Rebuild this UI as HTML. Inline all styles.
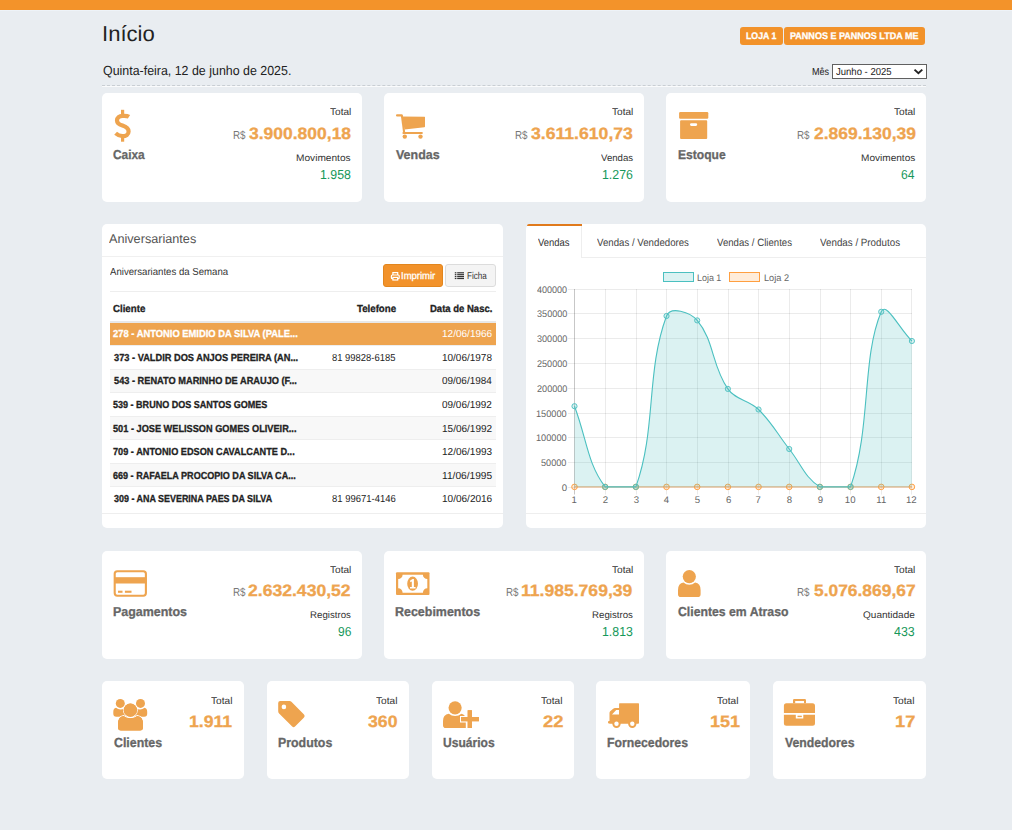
<!DOCTYPE html>
<html><head><meta charset="utf-8"><title>Início</title><style>
*{margin:0;padding:0;box-sizing:border-box}
html,body{width:1012px;height:830px;overflow:hidden;background:#e9edf1;font-family:"Liberation Sans",sans-serif;text-rendering:geometricPrecision}
.a{position:absolute}
.t{position:absolute;white-space:nowrap;font-family:"Liberation Sans",sans-serif}
.card{position:absolute;background:#fff;border-radius:5px}
</style></head><body>
<div class="a" style="left:0.00px;top:0.00px;width:1012.00px;height:10.00px;background:#f3932a;"></div>
<div class="a" style="left:0.00px;top:10.00px;width:1012.00px;height:1.00px;background:#eef3f8;"></div>
<div class="a" style="left:740.00px;top:27.00px;width:43.00px;height:18.00px;background:#f2922a;border-radius:3px"></div>
<div class="a" style="left:784.00px;top:27.00px;width:141.00px;height:18.00px;background:#f2922a;border-radius:3px"></div>
<div class="a" style="left:832.00px;top:64.00px;width:95.00px;height:15.00px;background:#fff;border:1px solid #606060"></div>
<div class="a" style="left:102px;top:85px;width:824px;height:0;border-top:1px dashed #c9ced3"></div>
<div class="a" style="left:102.00px;top:86.00px;width:824.00px;height:1.00px;background:#fafbfc;"></div>
<div class="card" style="left:102.00px;top:93.00px;width:260.00px;height:109.00px;"></div>
<div class="card" style="left:102.00px;top:551.00px;width:260.00px;height:108.00px;"></div>
<div class="card" style="left:384.00px;top:93.00px;width:260.00px;height:109.00px;"></div>
<div class="card" style="left:384.00px;top:551.00px;width:260.00px;height:108.00px;"></div>
<div class="card" style="left:666.00px;top:93.00px;width:260.00px;height:109.00px;"></div>
<div class="card" style="left:666.00px;top:551.00px;width:260.00px;height:108.00px;"></div>
<div class="card" style="left:102.00px;top:681.00px;width:142.00px;height:98.00px;"></div>
<div class="card" style="left:267.00px;top:681.00px;width:142.00px;height:98.00px;"></div>
<div class="card" style="left:432.00px;top:681.00px;width:142.00px;height:98.00px;"></div>
<div class="card" style="left:596.00px;top:681.00px;width:154.00px;height:98.00px;"></div>
<div class="card" style="left:773.00px;top:681.00px;width:153.00px;height:98.00px;"></div>
<div class="card" style="left:102.00px;top:224.00px;width:401.00px;height:304.00px;"></div>
<div class="card" style="left:526.00px;top:224.00px;width:400.00px;height:304.00px;"></div>
<div class="a" style="left:102.00px;top:256.00px;width:401.00px;height:1.00px;background:#f0f0f0;"></div>
<div class="a" style="left:110.00px;top:291.00px;width:386.00px;height:1.00px;background:#eeeeee;"></div>
<div class="a" style="left:110.00px;top:321.00px;width:386.00px;height:2.00px;background:#e8e8e8;"></div>
<div class="a" style="left:110.00px;top:322.70px;width:386.00px;height:22.30px;background:#eea44f;"></div>
<div class="a" style="left:110.00px;top:345.00px;width:386.00px;height:1.00px;background:#eeeeee;"></div>
<div class="a" style="left:110.00px;top:369.00px;width:386.00px;height:1.00px;background:#eeeeee;"></div>
<div class="a" style="left:110.00px;top:370.00px;width:386.00px;height:22.00px;background:#f8f8f8;"></div>
<div class="a" style="left:110.00px;top:392.00px;width:386.00px;height:1.00px;background:#eeeeee;"></div>
<div class="a" style="left:110.00px;top:416.00px;width:386.00px;height:1.00px;background:#eeeeee;"></div>
<div class="a" style="left:110.00px;top:417.00px;width:386.00px;height:22.00px;background:#f8f8f8;"></div>
<div class="a" style="left:110.00px;top:439.00px;width:386.00px;height:1.00px;background:#eeeeee;"></div>
<div class="a" style="left:110.00px;top:463.00px;width:386.00px;height:1.00px;background:#eeeeee;"></div>
<div class="a" style="left:110.00px;top:464.00px;width:386.00px;height:22.00px;background:#f8f8f8;"></div>
<div class="a" style="left:110.00px;top:486.00px;width:386.00px;height:1.00px;background:#eeeeee;"></div>
<div class="a" style="left:102.00px;top:513.00px;width:401.00px;height:1.00px;background:#eeeeee;"></div>
<div class="a" style="left:383.00px;top:264.00px;width:60.00px;height:23.00px;background:#f2922a;border:1px solid #e2861e;border-radius:3px"></div>
<div class="a" style="left:445.00px;top:264.00px;width:51.00px;height:23.00px;background:#f4f4f4;border:1px solid #dcdcdc;border-radius:3px"></div>
<div class="a" style="left:582.00px;top:257.00px;width:344.00px;height:1.00px;background:#eeeeee;"></div>
<div class="a" style="left:581.00px;top:226.00px;width:1.00px;height:32.00px;background:#eeeeee;"></div>
<div class="a" style="left:526.50px;top:224.00px;width:55.50px;height:2.00px;background:#e07a1c;border-radius:4px 0 0 0"></div>
<div class="a" style="left:526.00px;top:513.00px;width:400.00px;height:1.00px;background:#eeeeee;"></div>
<svg class="a" style="left:0;top:0" width="1012" height="830" viewBox="0 0 1012 830"><line x1="574.5" y1="289.0" x2="574.5" y2="494.5" stroke="rgba(0,0,0,0.22)" stroke-width="1"/><line x1="605.5" y1="289.0" x2="605.5" y2="494.5" stroke="rgba(0,0,0,0.08)" stroke-width="1"/><line x1="636.5" y1="289.0" x2="636.5" y2="494.5" stroke="rgba(0,0,0,0.08)" stroke-width="1"/><line x1="666.5" y1="289.0" x2="666.5" y2="494.5" stroke="rgba(0,0,0,0.08)" stroke-width="1"/><line x1="697.5" y1="289.0" x2="697.5" y2="494.5" stroke="rgba(0,0,0,0.08)" stroke-width="1"/><line x1="728.5" y1="289.0" x2="728.5" y2="494.5" stroke="rgba(0,0,0,0.08)" stroke-width="1"/><line x1="758.5" y1="289.0" x2="758.5" y2="494.5" stroke="rgba(0,0,0,0.08)" stroke-width="1"/><line x1="789.5" y1="289.0" x2="789.5" y2="494.5" stroke="rgba(0,0,0,0.08)" stroke-width="1"/><line x1="820.5" y1="289.0" x2="820.5" y2="494.5" stroke="rgba(0,0,0,0.08)" stroke-width="1"/><line x1="850.5" y1="289.0" x2="850.5" y2="494.5" stroke="rgba(0,0,0,0.08)" stroke-width="1"/><line x1="881.5" y1="289.0" x2="881.5" y2="494.5" stroke="rgba(0,0,0,0.08)" stroke-width="1"/><line x1="911.5" y1="289.0" x2="911.5" y2="494.5" stroke="rgba(0,0,0,0.08)" stroke-width="1"/><line x1="568.0" y1="487.5" x2="912.0" y2="487.5" stroke="rgba(0,0,0,0.08)" stroke-width="1"/><line x1="568.0" y1="462.5" x2="912.0" y2="462.5" stroke="rgba(0,0,0,0.08)" stroke-width="1"/><line x1="568.0" y1="437.5" x2="912.0" y2="437.5" stroke="rgba(0,0,0,0.08)" stroke-width="1"/><line x1="568.0" y1="413.5" x2="912.0" y2="413.5" stroke="rgba(0,0,0,0.08)" stroke-width="1"/><line x1="568.0" y1="388.5" x2="912.0" y2="388.5" stroke="rgba(0,0,0,0.08)" stroke-width="1"/><line x1="568.0" y1="363.5" x2="912.0" y2="363.5" stroke="rgba(0,0,0,0.08)" stroke-width="1"/><line x1="568.0" y1="338.5" x2="912.0" y2="338.5" stroke="rgba(0,0,0,0.08)" stroke-width="1"/><line x1="568.0" y1="313.5" x2="912.0" y2="313.5" stroke="rgba(0,0,0,0.08)" stroke-width="1"/><line x1="568.0" y1="289.5" x2="912.0" y2="289.5" stroke="rgba(0,0,0,0.08)" stroke-width="1"/><line x1="574.50" y1="486.90" x2="911.90" y2="486.90" stroke="rgba(235,165,105,0.85)" stroke-width="1.4"/><circle cx="574.50" cy="486.90" r="2.8" fill="rgba(255,159,64,0.2)" stroke="rgba(255,159,64,0.95)" stroke-width="1"/><circle cx="605.17" cy="486.90" r="2.8" fill="rgba(255,159,64,0.2)" stroke="rgba(255,159,64,0.95)" stroke-width="1"/><circle cx="635.85" cy="486.90" r="2.8" fill="rgba(255,159,64,0.2)" stroke="rgba(255,159,64,0.95)" stroke-width="1"/><circle cx="666.52" cy="486.90" r="2.8" fill="rgba(255,159,64,0.2)" stroke="rgba(255,159,64,0.95)" stroke-width="1"/><circle cx="697.19" cy="486.90" r="2.8" fill="rgba(255,159,64,0.2)" stroke="rgba(255,159,64,0.95)" stroke-width="1"/><circle cx="727.86" cy="486.90" r="2.8" fill="rgba(255,159,64,0.2)" stroke="rgba(255,159,64,0.95)" stroke-width="1"/><circle cx="758.54" cy="486.90" r="2.8" fill="rgba(255,159,64,0.2)" stroke="rgba(255,159,64,0.95)" stroke-width="1"/><circle cx="789.21" cy="486.90" r="2.8" fill="rgba(255,159,64,0.2)" stroke="rgba(255,159,64,0.95)" stroke-width="1"/><circle cx="819.88" cy="486.90" r="2.8" fill="rgba(255,159,64,0.2)" stroke="rgba(255,159,64,0.95)" stroke-width="1"/><circle cx="850.55" cy="486.90" r="2.8" fill="rgba(255,159,64,0.2)" stroke="rgba(255,159,64,0.95)" stroke-width="1"/><circle cx="881.23" cy="486.90" r="2.8" fill="rgba(255,159,64,0.2)" stroke="rgba(255,159,64,0.95)" stroke-width="1"/><circle cx="911.90" cy="486.90" r="2.8" fill="rgba(255,159,64,0.2)" stroke="rgba(255,159,64,0.95)" stroke-width="1"/><path d="M574.50 406.20 C586.77 438.48 587.07 463.08 605.17 486.90 C611.61 486.90 632.16 486.90 635.85 486.90 C656.70 428.80 645.70 372.51 666.52 316.00 C670.23 305.91 690.02 311.88 697.19 320.40 C714.56 341.04 711.42 365.02 727.86 388.90 C735.96 400.66 748.11 399.29 758.54 409.50 C772.65 423.33 776.78 433.32 789.21 449.00 C801.32 464.28 804.82 477.59 819.88 486.90 C829.36 486.90 846.94 486.90 850.55 486.90 C871.48 427.17 861.41 358.93 881.23 311.80 C885.95 300.57 899.63 329.32 911.90 341.00 L911.90 486.90 L574.50 486.90 Z" fill="rgba(75,192,192,0.2)" stroke="none"/><path d="M574.50 406.20 C586.77 438.48 587.07 463.08 605.17 486.90 C611.61 486.90 632.16 486.90 635.85 486.90 C656.70 428.80 645.70 372.51 666.52 316.00 C670.23 305.91 690.02 311.88 697.19 320.40 C714.56 341.04 711.42 365.02 727.86 388.90 C735.96 400.66 748.11 399.29 758.54 409.50 C772.65 423.33 776.78 433.32 789.21 449.00 C801.32 464.28 804.82 477.59 819.88 486.90 C829.36 486.90 846.94 486.90 850.55 486.90 C871.48 427.17 861.41 358.93 881.23 311.80 C885.95 300.57 899.63 329.32 911.90 341.00" fill="none" stroke="rgb(75,192,192)" stroke-width="1.1"/><circle cx="574.50" cy="406.20" r="2.6" fill="rgba(75,192,192,0.2)" stroke="rgba(75,192,192,0.9)" stroke-width="1"/><circle cx="605.17" cy="486.90" r="2.6" fill="rgba(75,192,192,0.2)" stroke="rgba(75,192,192,0.9)" stroke-width="1"/><circle cx="635.85" cy="486.90" r="2.6" fill="rgba(75,192,192,0.2)" stroke="rgba(75,192,192,0.9)" stroke-width="1"/><circle cx="666.52" cy="316.00" r="2.6" fill="rgba(75,192,192,0.2)" stroke="rgba(75,192,192,0.9)" stroke-width="1"/><circle cx="697.19" cy="320.40" r="2.6" fill="rgba(75,192,192,0.2)" stroke="rgba(75,192,192,0.9)" stroke-width="1"/><circle cx="727.86" cy="388.90" r="2.6" fill="rgba(75,192,192,0.2)" stroke="rgba(75,192,192,0.9)" stroke-width="1"/><circle cx="758.54" cy="409.50" r="2.6" fill="rgba(75,192,192,0.2)" stroke="rgba(75,192,192,0.9)" stroke-width="1"/><circle cx="789.21" cy="449.00" r="2.6" fill="rgba(75,192,192,0.2)" stroke="rgba(75,192,192,0.9)" stroke-width="1"/><circle cx="819.88" cy="486.90" r="2.6" fill="rgba(75,192,192,0.2)" stroke="rgba(75,192,192,0.9)" stroke-width="1"/><circle cx="850.55" cy="486.90" r="2.6" fill="rgba(75,192,192,0.2)" stroke="rgba(75,192,192,0.9)" stroke-width="1"/><circle cx="881.23" cy="311.80" r="2.6" fill="rgba(75,192,192,0.2)" stroke="rgba(75,192,192,0.9)" stroke-width="1"/><circle cx="911.90" cy="341.00" r="2.6" fill="rgba(75,192,192,0.2)" stroke="rgba(75,192,192,0.9)" stroke-width="1"/><rect x="663.5" y="272.5" width="30" height="9" fill="rgba(75,192,192,0.2)" stroke="rgb(75,192,192)" stroke-width="1"/><rect x="729.5" y="272.5" width="30" height="9" fill="rgba(255,159,64,0.2)" stroke="rgb(255,159,64)" stroke-width="1"/><path d="M914.5 69.6 L918.4 73.3 L922.3 69.6" fill="none" stroke="#222" stroke-width="1.9"/><path d="M129 116.8 C127 115.5 125 115.8 122.5 115.8 C119.3 115.8 117 117.5 117 120.5 C117 123.5 119.5 124.6 122.5 125.6 C125.8 126.7 128.6 128.2 128.6 131.5 C128.6 134.5 126 136.2 122.5 136.2 C119.5 136.2 117.5 135 115.6 133.3" fill="none" stroke="#eea44f" stroke-width="4.2"/><rect x="121" y="109.8" width="3.2" height="5" fill="#eea44f"/><rect x="121" y="136.5" width="3.2" height="5.2" fill="#eea44f"/><g transform="translate(396,114)" fill="#eea44f"><rect x="0" y="0.2" width="6.8" height="2.3" rx="1.1"/><path d="M4.8 1.2 L6.9 1.2 L9.2 18.4 L7.1 18.4 Z"/><path d="M5.6 2.6 L28.6 2.8 Q29 2.8 29 3.3 L29 12.6 Q29 13.1 28.4 13.2 L8.6 15.5 Z"/><rect x="6.4" y="18.1" width="20.5" height="2" rx="1"/><circle cx="8.8" cy="22.6" r="2.2"/><circle cx="24.5" cy="22.6" r="2.2"/></g><rect x="679.1" y="112" width="29.2" height="6.8" rx="1.2" fill="#eea44f"/><path d="M681.1 120.2 H706.2 Q707.2 120.2 707.2 121.2 V138 Q707.2 139 706.2 139 H681.1 Q680.1 139 680.1 138 V121.2 Q680.1 120.2 681.1 120.2 Z M691.3 123.2 Q690 123.2 690 124.55 Q690 125.9 691.3 125.9 H695.9 Q697.2 125.9 697.2 124.55 Q697.2 123.2 695.9 123.2 Z" fill="#eea44f" fill-rule="evenodd"/><rect x="114.7" y="571.2" width="31.2" height="24.5" rx="2.6" fill="none" stroke="#eea44f" stroke-width="2.1"/><rect x="114" y="577.2" width="32.5" height="6.3" fill="#eea44f"/><rect x="118" y="590.7" width="4.5" height="2.1" fill="#eea44f"/><rect x="124.9" y="590.7" width="6.6" height="2.1" fill="#eea44f"/><g transform="translate(396,572.3)"><rect x="0" y="0" width="33.5" height="22.6" rx="1" fill="#eea44f"/><path d="M6.6 2.4 H26.9 A4.4 4.4 0 0 0 31.3 6.8 V16 A4.4 4.4 0 0 0 26.9 20.4 H6.6 A4.4 4.4 0 0 0 2.2 16 V6.8 A4.4 4.4 0 0 0 6.6 2.4 Z" fill="#fff"/><ellipse cx="16.6" cy="11.4" rx="5.4" ry="7.1" fill="#eea44f"/><path d="M14.2 8.3 L16.6 6.6 H17.9 V14.6 H19.6 V16.2 H14 V14.6 H15.8 V9.2 L14.2 10 Z" fill="#fff"/></g><circle cx="689.3" cy="576.6" r="6.6" fill="#eea44f"/><path d="M683.5 582.6 Q686 584.8 689.3 584.8 Q692.6 584.8 695.1 582.6 Q700.6 583.6 700.6 590 V594.2 Q700.6 597 697.8 597 H680.8 Q678 597 678 594.2 V590 Q678 583.6 683.5 582.6 Z" fill="#eea44f"/><g fill="#eea44f"><circle cx="120.3" cy="703.4" r="4.5"/><circle cx="140.5" cy="703.4" r="4.5"/><path d="M116 707.8 Q118 709.4 120.4 709.4 Q122.8 709.4 124.6 707.9 Q127.2 708.6 127.2 713 V716.8 H116.3 Q113.3 716.8 113.3 713.8 V711.8 Q113.3 708.4 116 707.8 Z"/><path d="M144.5 707.8 Q142.5 709.4 140.1 709.4 Q137.7 709.4 135.9 707.9 Q133.3 708.6 133.3 713 V716.8 H144.2 Q147.2 716.8 147.2 713.8 V711.8 Q147.2 708.4 144.5 707.8 Z"/></g><g fill="#eea44f" stroke="#fff" stroke-width="1.6" paint-order="stroke"><circle cx="130.4" cy="710.2" r="6.6"/><path d="M123.5 715.9 Q126.5 718.2 130.4 718.2 Q134.3 718.2 137.3 715.9 Q143 716.8 143 723.5 V727.5 Q143 730.5 140 730.5 H121 Q118 730.5 118 727.5 V723.5 Q118 716.8 123.5 715.9 Z"/></g><g fill="#eea44f"><circle cx="130.4" cy="710.2" r="6.6"/><path d="M123.5 715.9 Q126.5 718.2 130.4 718.2 Q134.3 718.2 137.3 715.9 Q143 716.8 143 723.5 V727.5 Q143 730.5 140 730.5 H121 Q118 730.5 118 727.5 V723.5 Q118 716.8 123.5 715.9 Z"/></g><path d="M280.2 701 H289.6 Q290.6 701 291.4 701.8 L304 714.6 Q305.4 716 304 717.4 L295 726.6 Q293.6 728 292.2 726.6 L279.1 713.4 Q278.2 712.5 278.2 711.3 V703 Q278.2 701 280.2 701 Z" fill="#eea44f"/><circle cx="283.9" cy="706.9" r="2.3" fill="#fff"/><g fill="#eea44f"><circle cx="455.1" cy="707.8" r="6.6"/><path d="M448.8 713.8 Q451.6 716.1 455.1 716.1 Q458.6 716.1 461.4 713.8 Q465.8 714.6 465.8 720 V728 H445.8 Q443 728 443 725.2 V721 Q443 714.6 448.8 713.8 Z"/></g><path d="M467.7 710.2 H471.9 V717.1 H478.9 V721.3 H471.9 V728 H467.7 V721.3 H461.1 V717.1 H467.7 Z" fill="#eea44f" stroke="#fff" stroke-width="2.2" paint-order="stroke"/><path d="M467.7 710.2 H471.9 V717.1 H478.9 V721.3 H471.9 V728 H467.7 V721.3 H461.1 V717.1 H467.7 Z" fill="#eea44f"/><g fill="#eea44f"><rect x="619.1" y="703.3" width="19.9" height="20.1" rx="0.6"/><path d="M615 708 H620 V723.4 H609.5 V713 Q609.5 712 610.2 711.3 L613.2 708.7 Q614 708 615 708 Z M612 714.6 H619.1 V710 H616.2 Z" fill-rule="evenodd"/><rect x="608" y="720.9" width="31" height="2.5" rx="1"/><circle cx="616.5" cy="723.7" r="4.2"/><circle cx="632.3" cy="723.7" r="4.2"/></g><circle cx="616.5" cy="723.7" r="2.2" fill="#fff"/><circle cx="632.3" cy="723.7" r="2.2" fill="#fff"/><g fill="#eea44f"><path d="M786.4 703.3 H812.5 Q815 703.3 815 705.8 V712.9 H783.9 V705.8 Q783.9 703.3 786.4 703.3 Z"/><path d="M783.9 714.8 H795.8 V718.6 H803.3 V714.8 H815 V723.3 Q815 725.8 812.5 725.8 H786.4 Q783.9 725.8 783.9 723.3 Z"/><rect x="797.5" y="715.7" width="4.3" height="1.4"/><path d="M794.2 699 H804.8 Q806 699 806 700.2 V703.3 H804 V701.1 H795.2 V703.3 H793 V700.2 Q793 699 794.2 699 Z"/></g><g fill="none" stroke="#fff" stroke-width="1.2"><path d="M392.9 275 V272.6 H397.7 V275"/><rect x="391.4" y="275" width="7.8" height="3.6" rx="0.9"/><rect x="392.9" y="277.4" width="4.8" height="2.6" fill="#f2922a"/></g><g fill="#333"><rect x="454.8" y="272.2" width="1.6" height="1.2"/><rect x="457.2" y="272.2" width="6.8" height="1.2"/><rect x="454.8" y="274.1" width="1.6" height="1.2"/><rect x="457.2" y="274.1" width="6.8" height="1.2"/><rect x="454.8" y="276.0" width="1.6" height="1.2"/><rect x="457.2" y="276.0" width="6.8" height="1.2"/><rect x="454.8" y="277.9" width="1.6" height="1.2"/><rect x="457.2" y="277.9" width="6.8" height="1.2"/></g></svg>
<div class="t" id="inicio" style="left:102.06px;top:23.47px;font-size:21.60px;line-height:21.60px;transform:scaleX(1.0210);transform-origin:0 0;color:#222;">Início</div>
<div class="t" id="date" style="left:103.10px;top:63.73px;font-size:13.20px;line-height:13.20px;transform:scaleX(0.9409);transform-origin:0 0;color:#222;">Quinta-feira, 12 de junho de 2025.</div>
<div class="t" id="loja1" style="left:746.03px;top:32.07px;font-size:9.60px;line-height:9.60px;transform:scaleX(0.9124);transform-origin:0 0;color:#fff;font-weight:bold;-webkit-text-stroke:0.30px #fff;">LOJA 1</div>
<div class="t" id="pannos" style="left:789.81px;top:32.07px;font-size:9.60px;line-height:9.60px;transform:scaleX(0.9400);transform-origin:0 0;color:#fff;font-weight:bold;-webkit-text-stroke:0.30px #fff;">PANNOS E PANNOS LTDA ME</div>
<div class="t" id="mes" style="left:812.40px;top:68.37px;font-size:10.20px;line-height:10.20px;transform:scaleX(0.8904);transform-origin:0 0;color:#222;">Mês</div>
<div class="t" id="junho" style="left:836.23px;top:68.37px;font-size:10.20px;line-height:10.20px;transform:scaleX(0.9350);transform-origin:0 0;color:#222;">Junho - 2025</div>
<div class="t" id="c1_label" style="left:113.05px;top:148.88px;font-size:12.90px;line-height:12.90px;transform:scaleX(0.9222);transform-origin:0 0;color:#666666;font-weight:bold;-webkit-text-stroke:0.30px #666666;">Caixa</div>
<div class="t" id="c1_total" style="left:329.61px;top:107.52px;font-size:9.90px;line-height:9.90px;transform:scaleX(1.0209);transform-origin:0 0;color:#333333;">Total</div>
<div class="t" id="c1_rs" style="left:232.94px;top:129.78px;font-size:11.60px;line-height:11.60px;transform:scaleX(0.8484);transform-origin:0 0;color:#777;">R$</div>
<div class="t" id="c1_big" style="left:248.67px;top:125.72px;font-size:16.40px;line-height:16.40px;transform:scaleX(1.0668);transform-origin:0 0;color:#eea44f;font-weight:bold;-webkit-text-stroke:0.30px #eea44f;">3.900.800,18</div>
<div class="t" id="c1_sub" style="left:296.14px;top:153.67px;font-size:9.60px;line-height:9.60px;transform:scaleX(1.0553);transform-origin:0 0;color:#333333;">Movimentos</div>
<div class="t" id="c1_val" style="left:320.11px;top:167.80px;font-size:13.00px;line-height:13.00px;transform:scaleX(0.9504);transform-origin:0 0;color:#16985a;">1.958</div>
<div class="t" id="c2_label" style="left:395.62px;top:148.88px;font-size:12.90px;line-height:12.90px;transform:scaleX(0.9654);transform-origin:0 0;color:#666666;font-weight:bold;-webkit-text-stroke:0.30px #666666;">Vendas</div>
<div class="t" id="c2_total" style="left:611.61px;top:107.52px;font-size:9.90px;line-height:9.90px;transform:scaleX(1.0209);transform-origin:0 0;color:#333333;">Total</div>
<div class="t" id="c2_rs" style="left:515.47px;top:129.78px;font-size:11.60px;line-height:11.60px;transform:scaleX(0.8489);transform-origin:0 0;color:#777;">R$</div>
<div class="t" id="c2_big" style="left:530.97px;top:125.72px;font-size:16.40px;line-height:16.40px;transform:scaleX(1.0750);transform-origin:0 0;color:#eea44f;font-weight:bold;-webkit-text-stroke:0.30px #eea44f;">3.611.610,73</div>
<div class="t" id="c2_sub" style="left:600.77px;top:153.67px;font-size:9.60px;line-height:9.60px;transform:scaleX(1.0018);transform-origin:0 0;color:#333333;">Vendas</div>
<div class="t" id="c2_val" style="left:602.11px;top:167.80px;font-size:13.00px;line-height:13.00px;transform:scaleX(0.9486);transform-origin:0 0;color:#16985a;">1.276</div>
<div class="t" id="c3_label" style="left:677.61px;top:148.88px;font-size:12.90px;line-height:12.90px;transform:scaleX(0.9361);transform-origin:0 0;color:#666666;font-weight:bold;-webkit-text-stroke:0.30px #666666;">Estoque</div>
<div class="t" id="c3_total" style="left:893.61px;top:107.52px;font-size:9.90px;line-height:9.90px;transform:scaleX(1.0209);transform-origin:0 0;color:#333333;">Total</div>
<div class="t" id="c3_rs" style="left:797.47px;top:129.78px;font-size:11.60px;line-height:11.60px;transform:scaleX(0.8489);transform-origin:0 0;color:#777;">R$</div>
<div class="t" id="c3_big" style="left:813.57px;top:125.72px;font-size:16.40px;line-height:16.40px;transform:scaleX(1.0655);transform-origin:0 0;color:#eea44f;font-weight:bold;-webkit-text-stroke:0.30px #eea44f;">2.869.130,39</div>
<div class="t" id="c3_sub" style="left:860.86px;top:153.67px;font-size:9.60px;line-height:9.60px;transform:scaleX(1.0496);transform-origin:0 0;color:#333333;">Movimentos</div>
<div class="t" id="c3_val" style="left:901.42px;top:167.80px;font-size:13.00px;line-height:13.00px;transform:scaleX(0.9329);transform-origin:0 0;color:#16985a;">64</div>
<div class="t" id="r1_label" style="left:113.03px;top:606.08px;font-size:12.90px;line-height:12.90px;transform:scaleX(0.9660);transform-origin:0 0;color:#666666;font-weight:bold;-webkit-text-stroke:0.30px #666666;">Pagamentos</div>
<div class="t" id="r1_total" style="left:329.61px;top:565.52px;font-size:9.90px;line-height:9.90px;transform:scaleX(1.0209);transform-origin:0 0;color:#333333;">Total</div>
<div class="t" id="r1_rs" style="left:232.94px;top:586.78px;font-size:11.60px;line-height:11.60px;transform:scaleX(0.8484);transform-origin:0 0;color:#777;">R$</div>
<div class="t" id="r1_big" style="left:248.27px;top:582.72px;font-size:16.40px;line-height:16.40px;transform:scaleX(1.0723);transform-origin:0 0;color:#eea44f;font-weight:bold;-webkit-text-stroke:0.30px #eea44f;">2.632.430,52</div>
<div class="t" id="r1_sub" style="left:309.94px;top:610.67px;font-size:9.60px;line-height:9.60px;transform:scaleX(1.0094);transform-origin:0 0;color:#333333;">Registros</div>
<div class="t" id="r1_val" style="left:337.82px;top:624.80px;font-size:13.00px;line-height:13.00px;transform:scaleX(0.9261);transform-origin:0 0;color:#16985a;">96</div>
<div class="t" id="r2_label" style="left:394.64px;top:606.08px;font-size:12.90px;line-height:12.90px;transform:scaleX(0.9661);transform-origin:0 0;color:#666666;font-weight:bold;-webkit-text-stroke:0.30px #666666;">Recebimentos</div>
<div class="t" id="r2_total" style="left:611.61px;top:565.52px;font-size:9.90px;line-height:9.90px;transform:scaleX(1.0209);transform-origin:0 0;color:#333333;">Total</div>
<div class="t" id="r2_rs" style="left:505.97px;top:586.78px;font-size:11.60px;line-height:11.60px;transform:scaleX(0.8477);transform-origin:0 0;color:#777;">R$</div>
<div class="t" id="r2_big" style="left:521.36px;top:582.72px;font-size:16.40px;line-height:16.40px;transform:scaleX(1.0710);transform-origin:0 0;color:#eea44f;font-weight:bold;-webkit-text-stroke:0.30px #eea44f;">11.985.769,39</div>
<div class="t" id="r2_sub" style="left:591.94px;top:610.67px;font-size:9.60px;line-height:9.60px;transform:scaleX(1.0094);transform-origin:0 0;color:#333333;">Registros</div>
<div class="t" id="r2_val" style="left:601.76px;top:624.80px;font-size:13.00px;line-height:13.00px;transform:scaleX(0.9482);transform-origin:0 0;color:#16985a;">1.813</div>
<div class="t" id="r3_label" style="left:677.99px;top:606.08px;font-size:12.90px;line-height:12.90px;transform:scaleX(0.9497);transform-origin:0 0;color:#666666;font-weight:bold;-webkit-text-stroke:0.30px #666666;">Clientes em Atraso</div>
<div class="t" id="r3_total" style="left:893.61px;top:565.52px;font-size:9.90px;line-height:9.90px;transform:scaleX(1.0209);transform-origin:0 0;color:#333333;">Total</div>
<div class="t" id="r3_rs" style="left:797.47px;top:586.78px;font-size:11.60px;line-height:11.60px;transform:scaleX(0.8489);transform-origin:0 0;color:#777;">R$</div>
<div class="t" id="r3_big" style="left:813.75px;top:582.72px;font-size:16.40px;line-height:16.40px;transform:scaleX(1.0614);transform-origin:0 0;color:#eea44f;font-weight:bold;-webkit-text-stroke:0.30px #eea44f;">5.076.869,67</div>
<div class="t" id="r3_sub" style="left:863.14px;top:610.67px;font-size:9.60px;line-height:9.60px;transform:scaleX(1.0452);transform-origin:0 0;color:#333333;">Quantidade</div>
<div class="t" id="r3_val" style="left:894.27px;top:624.80px;font-size:13.00px;line-height:13.00px;transform:scaleX(0.9518);transform-origin:0 0;color:#16985a;">433</div>
<div class="t" id="s1_label" style="left:113.63px;top:735.61px;font-size:13.10px;line-height:13.10px;transform:scaleX(0.9429);transform-origin:0 0;color:#666666;font-weight:bold;-webkit-text-stroke:0.30px #666666;">Clientes</div>
<div class="t" id="s1_total" style="left:211.47px;top:696.52px;font-size:9.90px;line-height:9.90px;transform:scaleX(1.0257);transform-origin:0 0;color:#333333;">Total</div>
<div class="t" id="s1_val" style="left:189.36px;top:713.92px;font-size:16.40px;line-height:16.40px;transform:scaleX(1.0762);transform-origin:0 0;color:#eea44f;font-weight:bold;-webkit-text-stroke:0.30px #eea44f;">1.911</div>
<div class="t" id="s2_label" style="left:278.03px;top:735.61px;font-size:13.10px;line-height:13.10px;transform:scaleX(0.9443);transform-origin:0 0;color:#666666;font-weight:bold;-webkit-text-stroke:0.30px #666666;">Produtos</div>
<div class="t" id="s2_total" style="left:376.47px;top:696.52px;font-size:9.90px;line-height:9.90px;transform:scaleX(1.0257);transform-origin:0 0;color:#333333;">Total</div>
<div class="t" id="s2_val" style="left:368.31px;top:713.92px;font-size:16.40px;line-height:16.40px;transform:scaleX(1.0793);transform-origin:0 0;color:#eea44f;font-weight:bold;-webkit-text-stroke:0.30px #eea44f;">360</div>
<div class="t" id="s3_label" style="left:443.17px;top:735.61px;font-size:13.10px;line-height:13.10px;transform:scaleX(0.9223);transform-origin:0 0;color:#666666;font-weight:bold;-webkit-text-stroke:0.30px #666666;">Usuários</div>
<div class="t" id="s3_total" style="left:541.47px;top:696.52px;font-size:9.90px;line-height:9.90px;transform:scaleX(1.0257);transform-origin:0 0;color:#333333;">Total</div>
<div class="t" id="s3_val" style="left:543.30px;top:713.92px;font-size:16.40px;line-height:16.40px;transform:scaleX(1.1213);transform-origin:0 0;color:#eea44f;font-weight:bold;-webkit-text-stroke:0.30px #eea44f;">22</div>
<div class="t" id="s4_label" style="left:607.03px;top:735.61px;font-size:13.10px;line-height:13.10px;transform:scaleX(0.9353);transform-origin:0 0;color:#666666;font-weight:bold;-webkit-text-stroke:0.30px #666666;">Fornecedores</div>
<div class="t" id="s4_total" style="left:717.47px;top:696.52px;font-size:9.90px;line-height:9.90px;transform:scaleX(1.0257);transform-origin:0 0;color:#333333;">Total</div>
<div class="t" id="s4_val" style="left:709.53px;top:713.92px;font-size:16.40px;line-height:16.40px;transform:scaleX(1.0977);transform-origin:0 0;color:#eea44f;font-weight:bold;-webkit-text-stroke:0.30px #eea44f;">151</div>
<div class="t" id="s5_label" style="left:784.74px;top:735.61px;font-size:13.10px;line-height:13.10px;transform:scaleX(0.9362);transform-origin:0 0;color:#666666;font-weight:bold;-webkit-text-stroke:0.30px #666666;">Vendedores</div>
<div class="t" id="s5_total" style="left:893.47px;top:696.52px;font-size:9.90px;line-height:9.90px;transform:scaleX(1.0257);transform-origin:0 0;color:#333333;">Total</div>
<div class="t" id="s5_val" style="left:894.98px;top:713.92px;font-size:16.40px;line-height:16.40px;transform:scaleX(1.1165);transform-origin:0 0;color:#eea44f;font-weight:bold;-webkit-text-stroke:0.30px #eea44f;">17</div>
<div class="t" id="an_title" style="left:109.30px;top:233.43px;font-size:12.60px;line-height:12.60px;transform:scaleX(1.0051);transform-origin:0 0;color:#555;">Aniversariantes</div>
<div class="t" id="an_sub" style="left:110.16px;top:268.47px;font-size:10.20px;line-height:10.20px;transform:scaleX(0.9435);transform-origin:0 0;color:#333333;">Aniversariantes da Semana</div>
<div class="t" id="btn_imp" style="left:400.64px;top:271.82px;font-size:9.90px;line-height:9.90px;transform:scaleX(0.9604);transform-origin:0 0;color:#fff;-webkit-text-stroke:0.3px #fff;">Imprimir</div>
<div class="t" id="btn_ficha" style="left:466.55px;top:271.82px;font-size:9.90px;line-height:9.90px;transform:scaleX(0.8180);transform-origin:0 0;color:#333333;">Ficha</div>
<div class="t" id="th_cli" style="left:113.44px;top:305.47px;font-size:10.20px;line-height:10.20px;transform:scaleX(0.9501);transform-origin:0 0;color:#222;font-weight:bold;-webkit-text-stroke:0.30px #222;">Cliente</div>
<div class="t" id="th_tel" style="left:356.90px;top:305.47px;font-size:10.20px;line-height:10.20px;transform:scaleX(0.9502);transform-origin:0 0;color:#222;font-weight:bold;-webkit-text-stroke:0.30px #222;">Telefone</div>
<div class="t" id="th_dat" style="left:429.52px;top:305.47px;font-size:10.20px;line-height:10.20px;transform:scaleX(0.9336);transform-origin:0 0;color:#222;font-weight:bold;-webkit-text-stroke:0.30px #222;">Data de Nasc.</div>
<div class="t" id="rn0" style="left:113.43px;top:329.67px;font-size:10.20px;line-height:10.20px;transform:scaleX(0.9205);transform-origin:0 0;color:#fff;font-weight:bold;-webkit-text-stroke:0.30px #fff;">278 - ANTONIO EMIDIO DA SILVA (PALE...</div>
<div class="t" id="rd0" style="left:441.66px;top:329.67px;font-size:10.20px;line-height:10.20px;transform:scaleX(0.9846);transform-origin:0 0;color:#fff;">12/06/1966</div>
<div class="t" id="rn1" style="left:113.73px;top:354.22px;font-size:10.20px;line-height:10.20px;transform:scaleX(0.9079);transform-origin:0 0;color:#222;font-weight:bold;-webkit-text-stroke:0.30px #222;">373 - VALDIR DOS ANJOS PEREIRA (AN...</div>
<div class="t" id="rt1" style="left:332.01px;top:354.22px;font-size:10.20px;line-height:10.20px;transform:scaleX(0.9246);transform-origin:0 0;color:#222;">81 99828-6185</div>
<div class="t" id="rd1" style="left:441.66px;top:354.22px;font-size:10.20px;line-height:10.20px;transform:scaleX(0.9796);transform-origin:0 0;color:#222;">10/06/1978</div>
<div class="t" id="rn2" style="left:113.50px;top:376.77px;font-size:10.20px;line-height:10.20px;transform:scaleX(0.9060);transform-origin:0 0;color:#222;font-weight:bold;-webkit-text-stroke:0.30px #222;">543 - RENATO MARINHO DE ARAUJO (F...</div>
<div class="t" id="rd2" style="left:442.13px;top:376.77px;font-size:10.20px;line-height:10.20px;transform:scaleX(0.9765);transform-origin:0 0;color:#222;">09/06/1984</div>
<div class="t" id="rn3" style="left:113.43px;top:401.32px;font-size:10.20px;line-height:10.20px;transform:scaleX(0.8864);transform-origin:0 0;color:#222;font-weight:bold;-webkit-text-stroke:0.30px #222;">539 - BRUNO DOS SANTOS GOMES</div>
<div class="t" id="rd3" style="left:442.13px;top:401.32px;font-size:10.20px;line-height:10.20px;transform:scaleX(0.9783);transform-origin:0 0;color:#222;">09/06/1992</div>
<div class="t" id="rn4" style="left:113.43px;top:424.87px;font-size:10.20px;line-height:10.20px;transform:scaleX(0.9027);transform-origin:0 0;color:#222;font-weight:bold;-webkit-text-stroke:0.30px #222;">501 - JOSE WELISSON GOMES OLIVEIR...</div>
<div class="t" id="rd4" style="left:441.66px;top:424.87px;font-size:10.20px;line-height:10.20px;transform:scaleX(0.9837);transform-origin:0 0;color:#222;">15/06/1992</div>
<div class="t" id="rn5" style="left:113.26px;top:448.42px;font-size:10.20px;line-height:10.20px;transform:scaleX(0.9008);transform-origin:0 0;color:#222;font-weight:bold;-webkit-text-stroke:0.30px #222;">709 - ANTONIO EDSON CAVALCANTE D...</div>
<div class="t" id="rd5" style="left:441.66px;top:448.42px;font-size:10.20px;line-height:10.20px;transform:scaleX(0.9837);transform-origin:0 0;color:#222;">12/06/1993</div>
<div class="t" id="rn6" style="left:113.25px;top:471.97px;font-size:10.20px;line-height:10.20px;transform:scaleX(0.8884);transform-origin:0 0;color:#222;font-weight:bold;-webkit-text-stroke:0.30px #222;">669 - RAFAELA PROCOPIO DA SILVA CA...</div>
<div class="t" id="rd6" style="left:441.67px;top:471.97px;font-size:10.20px;line-height:10.20px;transform:scaleX(0.9993);transform-origin:0 0;color:#222;">11/06/1995</div>
<div class="t" id="rn7" style="left:113.73px;top:494.52px;font-size:10.20px;line-height:10.20px;transform:scaleX(0.8774);transform-origin:0 0;color:#222;font-weight:bold;-webkit-text-stroke:0.30px #222;">309 - ANA SEVERINA PAES DA SILVA</div>
<div class="t" id="rt7" style="left:331.99px;top:494.52px;font-size:10.20px;line-height:10.20px;transform:scaleX(0.9295);transform-origin:0 0;color:#222;">81 99671-4146</div>
<div class="t" id="rd7" style="left:441.66px;top:494.52px;font-size:10.20px;line-height:10.20px;transform:scaleX(0.9844);transform-origin:0 0;color:#222;">10/06/2016</div>
<div class="t" id="tab1" style="left:538.12px;top:238.13px;font-size:10.60px;line-height:10.60px;transform:scaleX(0.8922);transform-origin:0 0;color:#333;">Vendas</div>
<div class="t" id="tab2" style="left:597.05px;top:238.13px;font-size:10.60px;line-height:10.60px;transform:scaleX(0.9129);transform-origin:0 0;color:#444;">Vendas / Vendedores</div>
<div class="t" id="tab3" style="left:717.37px;top:238.13px;font-size:10.60px;line-height:10.60px;transform:scaleX(0.9094);transform-origin:0 0;color:#444;">Vendas / Clientes</div>
<div class="t" id="tab4" style="left:819.95px;top:238.13px;font-size:10.60px;line-height:10.60px;transform:scaleX(0.9243);transform-origin:0 0;color:#444;">Vendas / Produtos</div>
<div class="t" id="lg1" style="left:697.08px;top:274.47px;font-size:9.60px;line-height:9.60px;transform:scaleX(0.9307);transform-origin:0 0;color:#666;">Loja 1</div>
<div class="t" id="lg2" style="left:764.45px;top:274.47px;font-size:9.60px;line-height:9.60px;transform:scaleX(0.9561);transform-origin:0 0;color:#666;">Loja 2</div>
<div class="t" id="yl0" style="left:561.80px;top:483.77px;font-size:9.60px;line-height:9.60px;color:#666;">0</div>
<div class="t" id="yl1" style="left:541.36px;top:458.77px;font-size:9.60px;line-height:9.60px;transform:scaleX(0.9543);transform-origin:0 0;color:#666;">50000</div>
<div class="t" id="yl2" style="left:536.33px;top:433.77px;font-size:9.60px;line-height:9.60px;transform:scaleX(0.9593);transform-origin:0 0;color:#666;">100000</div>
<div class="t" id="yl3" style="left:536.33px;top:409.77px;font-size:9.60px;line-height:9.60px;transform:scaleX(0.9593);transform-origin:0 0;color:#666;">150000</div>
<div class="t" id="yl4" style="left:537.13px;top:384.77px;font-size:9.60px;line-height:9.60px;transform:scaleX(0.9500);transform-origin:0 0;color:#666;">200000</div>
<div class="t" id="yl5" style="left:537.06px;top:359.77px;font-size:9.60px;line-height:9.60px;transform:scaleX(0.9488);transform-origin:0 0;color:#666;">250000</div>
<div class="t" id="yl6" style="left:536.94px;top:334.77px;font-size:9.60px;line-height:9.60px;transform:scaleX(0.9476);transform-origin:0 0;color:#666;">300000</div>
<div class="t" id="yl7" style="left:536.78px;top:309.77px;font-size:9.60px;line-height:9.60px;transform:scaleX(0.9511);transform-origin:0 0;color:#666;">350000</div>
<div class="t" id="yl8" style="left:536.61px;top:285.77px;font-size:9.60px;line-height:9.60px;transform:scaleX(0.9398);transform-origin:0 0;color:#666;">400000</div>
<div class="t" id="xl0" style="left:571.55px;top:495.87px;font-size:9.60px;line-height:9.60px;color:#666;">1</div>
<div class="t" id="xl1" style="left:602.81px;top:495.87px;font-size:9.60px;line-height:9.60px;color:#666;">2</div>
<div class="t" id="xl2" style="left:633.68px;top:495.87px;font-size:9.60px;line-height:9.60px;color:#666;">3</div>
<div class="t" id="xl3" style="left:663.71px;top:495.87px;font-size:9.60px;line-height:9.60px;color:#666;">4</div>
<div class="t" id="xl4" style="left:694.77px;top:495.87px;font-size:9.60px;line-height:9.60px;color:#666;">5</div>
<div class="t" id="xl5" style="left:725.88px;top:495.87px;font-size:9.60px;line-height:9.60px;color:#666;">6</div>
<div class="t" id="xl6" style="left:755.62px;top:495.87px;font-size:9.60px;line-height:9.60px;color:#666;">7</div>
<div class="t" id="xl7" style="left:786.87px;top:495.87px;font-size:9.60px;line-height:9.60px;color:#666;">8</div>
<div class="t" id="xl8" style="left:817.70px;top:495.87px;font-size:9.60px;line-height:9.60px;color:#666;">9</div>
<div class="t" id="xl9" style="left:844.83px;top:495.87px;font-size:9.60px;line-height:9.60px;color:#666;">10</div>
<div class="t" id="xl10" style="left:876.28px;top:495.87px;font-size:9.60px;line-height:9.60px;color:#666;">11</div>
<div class="t" id="xl11" style="left:905.98px;top:495.87px;font-size:9.60px;line-height:9.60px;color:#666;">12</div>
</body></html>
